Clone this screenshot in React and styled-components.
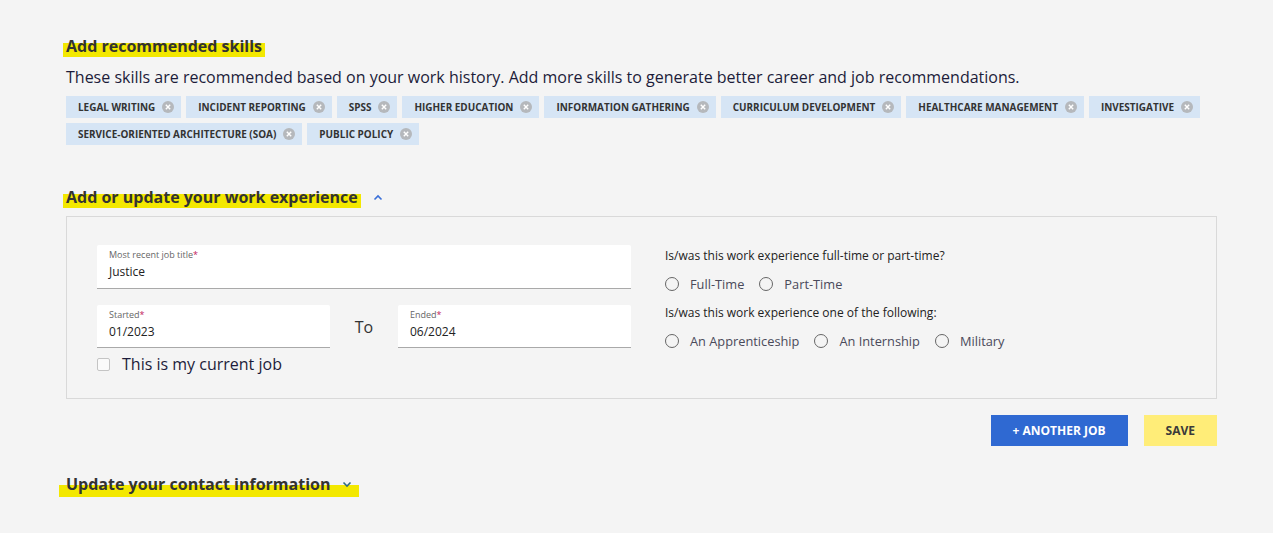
import React from "react";
import styled, { createGlobalStyle } from "styled-components";

const GlobalStyle = createGlobalStyle`
  html, body {
    margin: 0;
    padding: 0;
    background: #f4f4f4;
  }
  body {
    font-family: "Open Sans", "Noto Sans", sans-serif;
    color: #333;
  }
`;

const skills = [
  "Legal writing",
  "Incident reporting",
  "SPSS",
  "Higher education",
  "Information gathering",
  "Curriculum development",
  "Healthcare management",
  "Investigative",
  "Service-oriented architecture (SOA)",
  "Public policy",
];

const Page = styled.main`
  padding: 35px 56px 40px 66px;
`;

const Heading = styled.h2`
  margin: ${(p) => p.$top || 0}px 0 0 ${(p) => (p.$wide ? -7 : -3)}px;
  display: inline-flex;
  align-items: center;
  gap: 12px;
  font-size: 16px;
  line-height: 22px;
  font-weight: 700;
  color: #333;
`;

const Marked = styled.span`
  padding: 0 ${(p) => (p.$wide ? 7 : 3)}px;
  display: inline-flex;
  align-items: center;
  gap: 12px;
  background: linear-gradient(
    to bottom,
    transparent ${(p) => (p.$low ? 12 : 8)}px,
    #f3e800 ${(p) => (p.$low ? 12 : 8)}px
  );
  ${(p) => p.$low && "padding-bottom: 2px; margin-bottom: -2px;"}
`;

const Chevron = styled.svg`
  width: 10px;
  height: 7px;
  flex: 0 0 auto;
`;

const Block = styled.div`
  display: block;
`;

const Intro = styled.p`
  margin: 9px 0 0;
  font-size: 16px;
  line-height: 22px;
  color: #1c1c3a;
`;

const ChipList = styled.ul`
  list-style: none;
  margin: 8px 0 0;
  padding: 0;
  display: flex;
  flex-wrap: wrap;
  gap: 5px;
`;

const Chip = styled.li`
  height: 22px;
  display: inline-flex;
  align-items: center;
  gap: 7px;
  padding: 0 7px 0 12px;
  background: #d6e5f5;
  font-size: 9.95px;
  font-weight: 700;
  text-transform: uppercase;
  color: #333;
`;

const CloseDot = styled.span`
  width: 12px;
  height: 12px;
  border-radius: 50%;
  background: #b5b8bc;
  display: inline-flex;
  align-items: center;
  justify-content: center;
`;

const Card = styled.section`
  margin-top: 8px;
  border: 1px solid #d9d9d9;
  padding: 28px 30px 23px 30px;
  display: grid;
  grid-template-columns: 534px 1fr;
  column-gap: 34px;
`;

const LeftCol = styled.div`
  display: flex;
  flex-direction: column;
`;

const Field = styled.div`
  background: #fff;
  border-bottom: 1px solid #a9a9a9;
  border-radius: 2px 2px 0 0;
  height: ${(p) => p.$h}px;
  box-sizing: border-box;
  padding: 4px 12px 0;
  display: flex;
  flex-direction: column;
`;

const FieldLabel = styled.span`
  font-size: 9px;
  line-height: 12px;
  color: #666;
  & b {
    color: #c2185b;
    font-weight: 400;
  }
`;

const FieldValue = styled.span`
  margin-top: 3px;
  font-size: 12px;
  line-height: 16px;
  color: #222;
`;

const DateRow = styled.div`
  margin-top: 16px;
  display: grid;
  grid-template-columns: 233px 1fr 233px;
  align-items: center;
`;

const To = styled.span`
  text-align: center;
  font-size: 16px;
  color: #333;
`;

const CheckRow = styled.label`
  margin-top: 5px;
  display: flex;
  align-items: center;
  gap: 12px;
  font-size: 16px;
  line-height: 22px;
  color: #1c1c3a;
`;

const Box = styled.span`
  width: 13px;
  height: 13px;
  box-sizing: border-box;
  border: 1.5px solid #c4c4c4;
  border-radius: 2px;
  background: #fafafa;
`;

const RightCol = styled.div`
  display: flex;
  flex-direction: column;
  padding-top: 2px;
`;

const Question = styled.p`
  margin: ${(p) => p.$top || 0}px 0 0;
  font-size: 12px;
  line-height: 18px;
  color: #222;
`;

const RadioRow = styled.div`
  margin-top: 10px;
  display: flex;
  gap: 15px;
`;

const Radio = styled.label`
  display: inline-flex;
  align-items: center;
  gap: 11px;
  font-size: 12.8px;
  line-height: 18px;
  color: #4a4a5a;
`;

const Circle = styled.span`
  width: 14px;
  height: 14px;
  box-sizing: border-box;
  border: 1.5px solid #666;
  border-radius: 50%;
`;

const Actions = styled.div`
  margin-top: 16px;
  display: flex;
  justify-content: flex-end;
  gap: 16px;
`;

const Button = styled.button`
  height: 31px;
  border: 0;
  padding: 0 22px;
  background: ${(p) => (p.$primary ? "#2f69d2" : "#ffed78")};
  color: ${(p) => (p.$primary ? "#fff" : "#3a3a3a")};
  font-family: inherit;
  font-size: 12px;
  font-weight: 700;
  text-transform: uppercase;
  cursor: pointer;
`;

const ChevronIcon = ({ up, color }) => (
  <Chevron viewBox="0 0 10 7">
    <path
      d={up ? "M1.5 5.5 L5 2 L8.5 5.5" : "M1.5 1.5 L5 5 L8.5 1.5"}
      fill="none"
      stroke={color}
      strokeWidth="1.6"
    />
  </Chevron>
);

const X = () => (
  <svg width="6" height="6" viewBox="0 0 6 6">
    <path d="M0.8 0.8 L5.2 5.2 M5.2 0.8 L0.8 5.2" stroke="#fff" strokeWidth="1.4" />
  </svg>
);

export default function App() {
  return (
    <>
      <GlobalStyle />
      <Page>
        <Block>
          <Heading>
            <Marked>Add recommended skills</Marked>
          </Heading>
        </Block>
        <Intro>
          These skills are recommended based on your work history. Add more skills to generate
          better career and job recommendations.
        </Intro>
        <ChipList>
          {skills.map((s) => (
            <Chip key={s}>
              {s}
              <CloseDot>
                <X />
              </CloseDot>
            </Chip>
          ))}
        </ChipList>

        <Block>
          <Heading $top={41}>
            <Marked>Add or update your work experience</Marked>
            <ChevronIcon up color="#3a6fd8" />
          </Heading>
        </Block>
        <Card>
          <LeftCol>
            <Field $h={44}>
              <FieldLabel>
                Most recent job title<b>*</b>
              </FieldLabel>
              <FieldValue>Justice</FieldValue>
            </Field>
            <DateRow>
              <Field $h={43}>
                <FieldLabel>
                  Started<b>*</b>
                </FieldLabel>
                <FieldValue>01/2023</FieldValue>
              </Field>
              <To>To</To>
              <Field $h={43}>
                <FieldLabel>
                  Ended<b>*</b>
                </FieldLabel>
                <FieldValue>06/2024</FieldValue>
              </Field>
            </DateRow>
            <CheckRow>
              <Box />
              This is my current job
            </CheckRow>
          </LeftCol>
          <RightCol>
            <Question>Is/was this work experience full-time or part-time?</Question>
            <RadioRow>
              <Radio>
                <Circle />
                Full-Time
              </Radio>
              <Radio>
                <Circle />
                Part-Time
              </Radio>
            </RadioRow>
            <Question $top={11}>Is/was this work experience one of the following:</Question>
            <RadioRow>
              <Radio>
                <Circle />
                An Apprenticeship
              </Radio>
              <Radio>
                <Circle />
                An Internship
              </Radio>
              <Radio>
                <Circle />
                Military
              </Radio>
            </RadioRow>
          </RightCol>
        </Card>
        <Actions>
          <Button $primary>+ Another job</Button>
          <Button>Save</Button>
        </Actions>

        <Block>
          <Heading $top={27} $wide>
            <Marked $wide $low>
              Update your contact information
              <ChevronIcon color="#2f6a80" />
            </Marked>
          </Heading>
        </Block>
      </Page>
    </>
  );
}
